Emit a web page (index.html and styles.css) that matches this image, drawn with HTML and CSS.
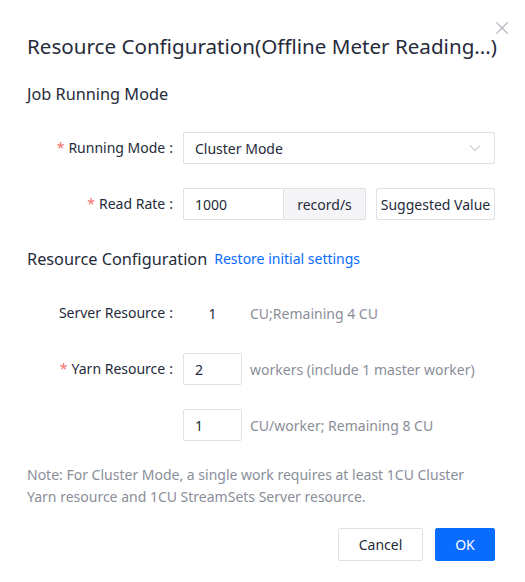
FILE: index.html
```html
<!DOCTYPE html>
<html>
<head>
<meta charset="utf-8">
<link rel="stylesheet" href="styles.css">
</head>
<body>
<div class="dialog">
  <button class="close" aria-label="close">
    <svg width="12" height="12" viewBox="0 0 12 12"><path d="M0.5 0.5L11.5 11.5M11.5 0.5L0.5 11.5" stroke="#b3b5c3" stroke-width="1.1" fill="none"/></svg>
  </button>
  <h1 class="title">Resource Configuration(Offline Meter Reading...)</h1>
  <h2 class="section">Job Running Mode</h2>
  <div class="form">
    <div class="row">
      <div class="label"><span class="req">*</span>Running Mode<span class="colon">:</span></div>
      <div class="select">
        <span>Cluster Mode</span>
        <svg width="12" height="8" viewBox="0 0 12 8"><path d="M1 1.5L6 6.5L11 1.5" stroke="#adb0b8" stroke-width="1" fill="none"/></svg>
      </div>
    </div>
    <div class="row">
      <div class="label"><span class="req">*</span>Read Rate<span class="colon">:</span></div>
      <div class="group">
        <div class="input wide">1000</div>
        <div class="addon">record/s</div>
      </div>
      <div class="btn-suggest">Suggested Value</div>
    </div>
  </div>
  <div class="section-line">
    <h2 class="section">Resource Configuration</h2>
    <a class="link">Restore initial settings</a>
  </div>
  <div class="form res">
    <div class="row">
      <div class="label">Server Resource<span class="colon">:</span></div>
      <div class="value">1</div>
      <div class="hint">CU;Remaining 4 CU</div>
    </div>
    <div class="row">
      <div class="label"><span class="req">*</span>Yarn Resource<span class="colon">:</span></div>
      <div class="input small">2</div>
      <div class="hint">workers (include 1 master worker)</div>
    </div>
    <div class="row">
      <div class="label"></div>
      <div class="input small">1</div>
      <div class="hint">CU/worker; Remaining 8 CU</div>
    </div>
  </div>
  <p class="note">Note: For Cluster Mode, a single work requires at least 1CU Cluster Yarn resource and 1CU StreamSets Server resource.</p>
  <div class="footer">
    <button class="btn">Cancel</button>
    <button class="btn primary">OK</button>
  </div>
</div>
</body>
</html>
```
FILE: styles.css
```css
* { box-sizing: border-box; }
html, body { margin: 0; padding: 0; background: #fff; }
body {
  font-family: "Noto Sans", "Open Sans", sans-serif;
  color: #252b3a;
  font-size: 14px;
}
.dialog {
  position: relative;
  width: 525px;
  height: 582px;
  padding: 32px 30px 0 27px;
}
.close {
  position: absolute;
  top: 22px;
  right: 17px;
  width: 12px;
  height: 12px;
  padding: 0;
  border: 0;
  background: none;
  display: block;
}
.close svg { display: block; }
.title {
  margin: 0;
  font-weight: 400;
  font-size: 20.6px;
  line-height: 28px;
  white-space: nowrap;
  letter-spacing: 0;
}
.section {
  margin: 0;
  font-weight: 400;
  font-size: 16.3px;
  line-height: 24px;
}
.title + .section { margin-top: 22px; }
.form {
  display: flex;
  flex-direction: column;
  gap: 24px;
  margin-top: 26px;
}
.row {
  display: flex;
  align-items: center;
  height: 32px;
}
.label {
  width: 156px;
  flex: none;
  text-align: right;
  padding-right: 10px;
  line-height: 20px;
}
.req {
  color: #f66f6a;
  margin-right: 4px;
}
.colon { margin-left: 4px; }
.select {
  width: 312px;
  height: 32px;
  border: 1px solid #dfe1e6;
  border-radius: 2px;
  display: flex;
  align-items: center;
  justify-content: space-between;
  padding: 0 13px 0 11px;
}
.group {
  display: flex;
  height: 32px;
}
.input {
  height: 32px;
  border: 1px solid #dfe1e6;
  border-radius: 2px;
  padding: 0 11px;
  display: flex;
  align-items: center;
}
.input.wide {
  width: 101px;
  border-radius: 2px 0 0 2px;
}
.addon {
  width: 82px;
  height: 32px;
  border: 1px solid #dfe1e6;
  border-left: 0;
  background: #f5f5f7;
  display: flex;
  align-items: center;
  justify-content: center;
  border-radius: 0 2px 2px 0;
}
.btn-suggest {
  margin-left: 10px;
  width: 120px;
  height: 32px;
  border: 1px solid #dfe1e6;
  border-radius: 2px;
  display: flex;
  align-items: center;
  justify-content: center;
  white-space: nowrap;
}
.section-line {
  display: flex;
  align-items: center;
  gap: 7px;
  margin-top: 27px;
}
.link {
  color: #0a6cff;
  font-size: 14px;
  line-height: 24px;
}
.res { margin-top: 26px; }
.value {
  width: 59px;
  text-align: center;
}
.input.small { width: 59px; }
.hint {
  margin-left: 8px;
  color: #8a8e99;
  white-space: nowrap;
}
.note {
  margin: 23px 0 0;
  color: #8a8e99;
  line-height: 22px;
  padding-right: 0;
}
.footer {
  display: flex;
  justify-content: flex-end;
  gap: 12px;
  margin-top: 20px;
}
.btn {
  height: 33px;
  padding: 0;
  width: 85px;
  font-family: inherit;
  font-size: 14px;
  color: #252b3a;
  background: #fff;
  border: 1px solid #dfe1e6;
  border-radius: 2px;
}
.btn.primary {
  width: 60px;
  background: #0a6cff;
  border-color: #0a6cff;
  color: #fff;
}
```
